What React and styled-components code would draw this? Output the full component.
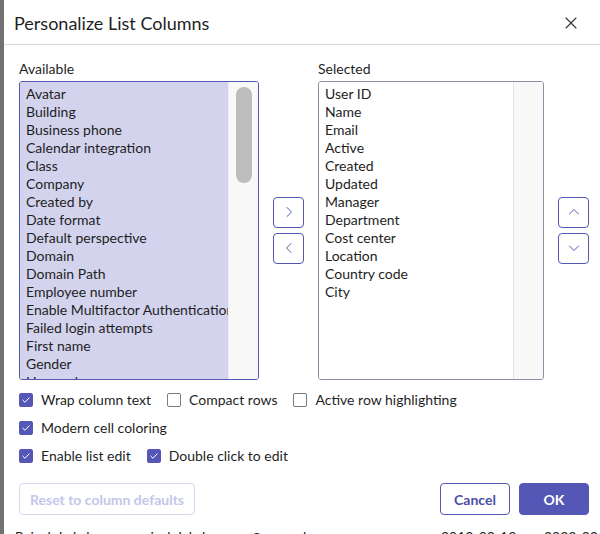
import React from 'react'
import styled, { createGlobalStyle } from 'styled-components'

const GlobalStyle = createGlobalStyle`
  html, body {
    margin: 0;
    padding: 0;
  }
  body {
    font-family: Lato, "Noto Sans", sans-serif;
    color: #1f1f1f;
    background: #fff;
  }
`

const PRIMARY = '#5457b5'
const LAVENDER = '#d3d3ed'

const Screen = styled.div`
  width: 600px;
  height: 534px;
  overflow: hidden;
  background: linear-gradient(to right, #727272 0 4px, #fff 4px);
`

const Dialog = styled.div`
  margin-left: 4px;
  width: 600px;
  height: 528px;
  box-sizing: border-box;
  background: #fff;
  border-radius: 0 0 6px 6px;
  display: flex;
  flex-direction: column;
`

const Header = styled.div`
  height: 45px;
  box-sizing: border-box;
  border-bottom: 1px solid #d9d9d9;
  padding: 1px 26px 0 10px;
  display: flex;
  align-items: center;
  justify-content: space-between;
`

const Title = styled.h1`
  margin: 0;
  font-size: 18px;
  font-weight: 400;
  color: #1f1f1f;
`

const CloseBtn = styled.button`
  border: none;
  background: none;
  padding: 0;
  width: 14px;
  height: 14px;
  display: flex;
  align-items: center;
  justify-content: center;
  color: #333;
`

const Body = styled.div`
  flex: 1;
  padding: 15px 15px 13px;
  display: flex;
  flex-direction: column;
`

const Columns = styled.div`
  display: grid;
  grid-template-columns: 240px 59px 226px 45px;
  grid-template-rows: 17px 299px;
  row-gap: 4px;
`

const Label = styled.div`
  font-size: 14px;
  line-height: 17px;
  grid-column: ${p => p.$col};
`

const ListBox = styled.div`
  grid-column: ${p => p.$col};
  box-sizing: border-box;
  height: 299px;
  border: 1px solid ${p => (p.$active ? PRIMARY : '#8d8ea3')};
  border-radius: 3px;
  display: flex;
  overflow: hidden;
`

const Items = styled.ul`
  flex: 1;
  min-width: 0;
  margin: 0;
  padding: 3px 0 0 6px;
  list-style: none;
  background: ${p => (p.$active ? LAVENDER : '#fff')};
`

const Item = styled.li`
  font-size: 14px;
  line-height: 18px;
  white-space: nowrap;
  overflow: hidden;
  color: #1e1e1e;
`

const Track = styled.div`
  width: 30px;
  flex: none;
  box-sizing: border-box;
  background: #f8f8f8;
  border-left: 1px solid ${p => (p.$active ? '#ececf4' : '#e2e2e2')};
  display: flex;
  justify-content: center;
  padding-top: 5px;
`

const Thumb = styled.div`
  width: 16px;
  height: 96px;
  border-radius: 8px;
  background: #bdbdbd;
`

const MoveStack = styled.div`
  grid-column: ${p => p.$col};
  grid-row: 2;
  display: flex;
  flex-direction: column;
  gap: 5px;
  align-self: center;
  justify-self: ${p => p.$align};
  margin-top: -1px;
`

const IconButton = styled.button`
  width: 31px;
  height: 31px;
  box-sizing: border-box;
  border: 1px solid ${PRIMARY};
  border-radius: 4px;
  background: #fff;
  padding: 0;
  display: flex;
  align-items: center;
  justify-content: center;
  color: ${PRIMARY};
`

const Options = styled.div`
  margin-top: 11px;
  display: flex;
  flex-direction: column;
  gap: 10px;
`

const OptionRow = styled.div`
  display: flex;
  gap: 16px;
`

const Option = styled.label`
  display: flex;
  align-items: center;
  gap: 8px;
  font-size: 14px;
  line-height: 18px;
  color: #1f1f1f;
`

const Box = styled.span`
  width: 14px;
  height: 14px;
  box-sizing: border-box;
  border-radius: 2px;
  border: 1px solid ${p => (p.$checked ? PRIMARY : '#7a7a7a')};
  background: ${p => (p.$checked ? PRIMARY : '#fff')};
  display: flex;
  align-items: center;
  justify-content: center;
`

const Footer = styled.div`
  margin-top: auto;
  display: flex;
  align-items: center;
`

const Button = styled.button`
  height: 32px;
  box-sizing: border-box;
  border-radius: 4px;
  padding: 0;
  width: ${p => p.$w}px;
  font-family: inherit;
  font-size: 14px;
  font-weight: 700;
  border: 1px solid ${p => (p.$variant === 'disabled' ? '#d8d8f1' : PRIMARY)};
  background: ${p => (p.$variant === 'primary' ? PRIMARY : '#fff')};
  color: ${p =>
    p.$variant === 'primary' ? '#fff' : p.$variant === 'disabled' ? '#c5c6ea' : '#4b4ea6'};
`

const Spacer = styled.div`
  flex: 1;
`

const FooterRight = styled.div`
  display: flex;
  gap: 9px;
`

const BehindRow = styled.div`
  display: grid;
  grid-template-columns: 426px 103px auto;
  padding-left: 15px;
  font-size: 14px;
  line-height: 14px;
  margin-top: 2px;
  color: #222;
  white-space: nowrap;
`

const Chevron = ({ dir }) => {
  const paths = {
    right: 'M4 1.5 L8.5 6 L4 10.5',
    left: 'M8 1.5 L3.5 6 L8 10.5',
    up: 'M1.5 8 L6 3.5 L10.5 8',
    down: 'M1.5 4 L6 8.5 L10.5 4',
  }
  return (
    <svg width="12" height="12" viewBox="0 0 12 12" fill="none">
      <path d={paths[dir]} stroke="currentColor" strokeWidth="1" strokeLinecap="round" strokeLinejoin="round" />
    </svg>
  )
}

const Check = ({ checked, children }) => (
  <Option>
    <Box $checked={checked}>
      {checked && (
        <svg width="10" height="10" viewBox="0 0 10 10" fill="none">
          <path d="M1.8 5.2 L4 7.3 L8.2 2.8" stroke="#fff" strokeWidth="1" strokeLinecap="round" strokeLinejoin="round" />
        </svg>
      )}
    </Box>
    {children}
  </Option>
)

const available = [
  'Avatar', 'Building', 'Business phone', 'Calendar integration', 'Class', 'Company',
  'Created by', 'Date format', 'Default perspective', 'Domain', 'Domain Path',
  'Employee number', 'Enable Multifactor Authentication', 'Failed login attempts',
  'First name', 'Gender', 'Home phone',
]

const selected = [
  'User ID', 'Name', 'Email', 'Active', 'Created', 'Updated', 'Manager',
  'Department', 'Cost center', 'Location', 'Country code', 'City',
]

export default function App() {
  return (
    <Screen>
      <GlobalStyle />
      <Dialog>
        <Header>
          <Title>Personalize List Columns</Title>
          <CloseBtn aria-label="Close">
            <svg width="12" height="12" viewBox="0 0 12 12" fill="none">
              <path d="M1 1 L11 11 M11 1 L1 11" stroke="#333" strokeWidth="1.1" strokeLinecap="round" />
            </svg>
          </CloseBtn>
        </Header>
        <Body>
          <Columns>
            <Label $col={1}>Available</Label>
            <Label $col={3}>Selected</Label>
            <ListBox $col={1} $active>
              <Items $active>
                {available.map(i => <Item key={i}>{i}</Item>)}
              </Items>
              <Track $active>
                <Thumb />
              </Track>
            </ListBox>
            <MoveStack $col={2} $align="center">
              <IconButton><Chevron dir="right" /></IconButton>
              <IconButton><Chevron dir="left" /></IconButton>
            </MoveStack>
            <ListBox $col={3}>
              <Items>
                {selected.map(i => <Item key={i}>{i}</Item>)}
              </Items>
              <Track />
            </ListBox>
            <MoveStack $col={4} $align="end">
              <IconButton><Chevron dir="up" /></IconButton>
              <IconButton><Chevron dir="down" /></IconButton>
            </MoveStack>
          </Columns>
          <Options>
            <OptionRow>
              <Check checked>Wrap column text</Check>
              <Check>Compact rows</Check>
              <Check>Active row highlighting</Check>
            </OptionRow>
            <OptionRow>
              <Check checked>Modern cell coloring</Check>
            </OptionRow>
            <OptionRow>
              <Check checked>Enable list edit</Check>
              <Check checked>Double click to edit</Check>
            </OptionRow>
          </Options>
          <Footer>
            <Button $variant="disabled" $w={176}>Reset to column defaults</Button>
            <Spacer />
            <FooterRight>
              <Button $w={70}>Cancel</Button>
              <Button $variant="primary" $w={70}>OK</Button>
            </FooterRight>
          </Footer>
        </Body>
      </Dialog>
      <BehindRow>
        <span>Rajesh Lakshmanan rajesh.lakshmanan@example.com</span>
        <span>2012-02-13</span>
        <span>2023-03-01</span>
      </BehindRow>
    </Screen>
  )
}
